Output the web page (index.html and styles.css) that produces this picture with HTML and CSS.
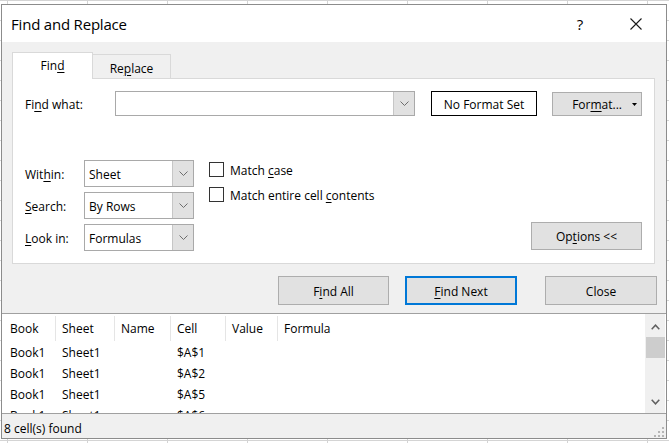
FILE: index.html
```html
<!DOCTYPE html>
<html>
<head>
<meta charset="utf-8">
<link rel="stylesheet" href="styles.css">
</head>
<body>
<div class="dialog">
  <div class="titlebar">
    <span class="title">Find and Replace</span>
    <span class="tb-btn help">?</span>
    <span class="tb-btn close"><svg width="12" height="12" viewBox="0 0 12 12"><path d="M0.5 0.5 L11.5 11.5 M11.5 0.5 L0.5 11.5" stroke="#1a1a1a" stroke-width="1.1" fill="none"/></svg></span>
  </div>
  <div class="main">
    <div class="tabs">
      <div class="tab active">Fin<u>d</u></div>
      <div class="tab">Re<u>p</u>lace</div>
    </div>
    <div class="panel">
      <div class="row-find">
        <span class="lbl-find">Fi<u>n</u>d what:</span>
        <div class="combo combo-find">
          <span class="combo-text"></span>
          <span class="combo-btn"><svg width="9" height="5" viewBox="0 0 9 5"><path d="M0.5 0.5 L4.5 4.5 L8.5 0.5" stroke="#6d6d6d" fill="none"/></svg></span>
        </div>
        <div class="fmt-preview">No Format Set</div>
        <div class="btn btn-format"><span>For<u>m</u>at...</span><svg width="5" height="3" viewBox="0 0 5 3"><path d="M0 0 H5 L2.5 3 Z" fill="#000"/></svg></div>
      </div>
      <div class="row-options">
        <div class="opt-grid">
          <span class="lbl">Wit<u>h</u>in:</span>
          <div class="combo"><span class="combo-text">Sheet</span><span class="combo-btn"><svg width="9" height="5" viewBox="0 0 9 5"><path d="M0.5 0.5 L4.5 4.5 L8.5 0.5" stroke="#6d6d6d" fill="none"/></svg></span></div>
          <span class="lbl"><u>S</u>earch:</span>
          <div class="combo"><span class="combo-text">By Rows</span><span class="combo-btn"><svg width="9" height="5" viewBox="0 0 9 5"><path d="M0.5 0.5 L4.5 4.5 L8.5 0.5" stroke="#6d6d6d" fill="none"/></svg></span></div>
          <span class="lbl"><u>L</u>ook in:</span>
          <div class="combo"><span class="combo-text">Formulas</span><span class="combo-btn"><svg width="9" height="5" viewBox="0 0 9 5"><path d="M0.5 0.5 L4.5 4.5 L8.5 0.5" stroke="#6d6d6d" fill="none"/></svg></span></div>
        </div>
        <div class="checks">
          <div class="check"><span class="box"></span><span>Match <u>c</u>ase</span></div>
          <div class="check"><span class="box"></span><span>Match entire cell <u>c</u>ontents</span></div>
        </div>
        <div class="btn btn-options">Op<u>t</u>ions &lt;&lt;</div>
      </div>
    </div>
    <div class="actions">
      <div class="btn act">F<u>i</u>nd All</div>
      <div class="btn act default"><u>F</u>ind Next</div>
      <div class="btn act close-btn">Close</div>
    </div>
  </div>
  <div class="results">
    <div class="table">
      <div class="thead">
        <span class="c c1">Book</span><span class="c c2">Sheet</span><span class="c c3">Name</span><span class="c c4">Cell</span><span class="c c5">Value</span><span class="c c6">Formula</span>
      </div>
      <div class="tr"><span class="c c1">Book1</span><span class="c c2">Sheet1</span><span class="c c3"></span><span class="c c4">$A$1</span></div>
      <div class="tr"><span class="c c1">Book1</span><span class="c c2">Sheet1</span><span class="c c3"></span><span class="c c4">$A$2</span></div>
      <div class="tr"><span class="c c1">Book1</span><span class="c c2">Sheet1</span><span class="c c3"></span><span class="c c4">$A$5</span></div>
      <div class="tr"><span class="c c1">Book1</span><span class="c c2">Sheet1</span><span class="c c3"></span><span class="c c4">$A$6</span></div>
    </div>
    <div class="scrollbar">
      <span class="sb-btn sb-up"><svg width="9" height="6" viewBox="0 0 9 6"><path d="M0.7 5.2 L4.5 1.2 L8.3 5.2" stroke="#606060" stroke-width="1.5" fill="none"/></svg></span>
      <span class="thumb"></span>
      <span class="sb-fill"></span>
      <span class="sb-btn"><svg width="9" height="6" viewBox="0 0 9 6"><path d="M0.7 0.8 L4.5 4.8 L8.3 0.8" stroke="#606060" stroke-width="1.5" fill="none"/></svg></span>
    </div>
  </div>
  <div class="status">
    <span>8 cell(s) found</span>
    <svg class="grip" width="10" height="10" viewBox="0 0 10 10"><g fill="#b5b5b5"><rect x="8" y="0" width="2" height="2"/><rect x="4" y="4" width="2" height="2"/><rect x="8" y="4" width="2" height="2"/><rect x="0" y="8" width="2" height="2"/><rect x="4" y="8" width="2" height="2"/><rect x="8" y="8" width="2" height="2"/></g></svg>
  </div>
</div>
</body>
</html>
```
FILE: styles.css
```css
* { box-sizing: border-box; }
html, body { margin: 0; }
body {
  width: 669px;
  height: 443px;
  overflow: hidden;
  padding: 4px 0 0 1px;
  background-color: #fff;
  background-image:
    linear-gradient(to right, #d4d4d4 1px, transparent 1px),
    linear-gradient(to bottom, #d4d4d4 1px, transparent 1px);
  background-size: 80px 100%, 100% 20px;
  background-position: 7px 0, 0 0;
  font-family: "Segoe UI", "Open Sans", "Noto Sans", sans-serif;
  font-size: 12px;
  color: #000;
}
u { text-decoration: underline; text-underline-offset: 2px; }

.dialog {
  width: 666px;
  height: 435px;
  border: 1px solid #8c8c8c;
  background: #f0f0f0;
  display: flex;
  flex-direction: column;
  overflow: hidden;
}

.titlebar {
  height: 37px;
  flex: none;
  background: #fff;
  display: flex;
  align-items: center;
  padding: 1px 7px 0 9px;
}
.title { flex: 1; font-size: 15px; letter-spacing: -0.2px; }
.tb-btn {
  width: 46px;
  height: 30px;
  display: flex;
  align-items: center;
  justify-content: center;
}
.help { font-size: 15px; margin-right: 10px; }

.main {
  flex: none;
  padding: 10px 11px 8px 10px;
  display: flex;
  flex-direction: column;
}

.tabs { display: flex; height: 26px; align-items: flex-end; }
.tab {
  display: flex;
  align-items: center;
  justify-content: center;
  border: 1px solid #d9d9d9;
  border-bottom: none;
}
.tab.active {
  width: 81px;
  height: 27px;
  background: #fff;
  position: relative;
  z-index: 1;
  margin-bottom: -1px;
  padding-bottom: 1px;
}
.tab:not(.active) {
  width: 78px;
  height: 24px;
  border-left: none;
  padding-top: 3px;
}

.panel {
  height: 186px;
  background: #fff;
  border: 1px solid #d9d9d9;
  padding: 12px 12px 12px 12px;
  display: flex;
  flex-direction: column;
}

.row-find { display: flex; align-items: center; height: 25px; }
.lbl-find { width: 90px; flex: none; padding-top: 1px; }
.lbl { padding-top: 2px; }

.combo {
  display: flex;
  height: 27px;
  border: 1px solid #a9a9a9;
  background: #fff;
}
.combo-text { flex: 1; display: flex; align-items: center; padding-left: 4px; padding-top: 1px; }
.combo-btn {
  width: 21px;
  flex: none;
  background: #e1e1e1;
  border-left: 1px solid #c6c6c6;
  display: flex;
  align-items: center;
  justify-content: center;
}
.combo-find { width: 300px; height: 25px; }

.fmt-preview {
  margin-left: 16px;
  width: 106px;
  height: 25px;
  border: 1px solid #000;
  display: flex;
  align-items: center;
  justify-content: center;
  padding-top: 1px;
}

.btn {
  background: #e1e1e1;
  border: 1px solid #adadad;
  display: flex;
  align-items: center;
  justify-content: center;
  padding-top: 1px;
}
.btn-format {
  margin-left: 15px;
  width: 90px;
  height: 24px;
  justify-content: flex-end;
  padding-right: 4px;
  gap: 10px;
}

.row-options { display: flex; margin-top: 44px; flex: 1; }
.opt-grid {
  display: grid;
  grid-template-columns: 59px 110px;
  grid-auto-rows: 27px;
  row-gap: 5px;
  align-items: center;
}
.opt-grid .combo { height: 27px; }

.checks { margin-left: 15px; margin-top: -3px; display: flex; flex-direction: column; }
.check { height: 25px; display: flex; align-items: center; gap: 6px; }
.check span:last-child { padding-top: 2px; }
.box {
  width: 15px;
  height: 15px;
  border: 1px solid #333;
  background: #fff;
  flex: none;
}

.btn-options {
  margin-left: auto;
  align-self: flex-end;
  margin-bottom: 1px;
  width: 111px;
  height: 28px;
}

.actions {
  display: flex;
  justify-content: flex-end;
  margin-top: 12px;
  margin-right: -2px;
}
.act { width: 111px; height: 29px; }
.act.default {
  margin-left: 16px;
  width: 112px;
  border: 2px solid #0078d7;
}
.act.close-btn { margin-left: 28px; width: 112px; }

.results {
  height: 101px;
  flex: none;
  background: #fff;
  border-top: 1px solid #a0a0a0;
  border-bottom: 1px solid #a0a0a0;
  display: flex;
  overflow: hidden;
}
.table { flex: 1; overflow: hidden; }
.thead { display: flex; height: 27px; align-items: stretch; padding-top: 2px; }
.thead .c { border-right: 1px solid #e5e5e5; }
.thead .c6 { border-right: none; }
.tr { display: flex; height: 21px; align-items: center; padding-top: 1px; }
.c { display: flex; align-items: center; padding-left: 6px; flex: none; white-space: nowrap; }
.c1 { width: 54px; padding-left: 8px; }
.c2 { width: 59px; }
.c3 { width: 56px; }
.c4 { width: 55px; }
.c5 { width: 52px; }
.c6 { width: 80px; }

.scrollbar {
  width: 20px;
  margin-right: 1px;
  background: #f0f0f0;
  display: flex;
  flex-direction: column;
}
.sb-btn { height: 22px; display: flex; align-items: center; justify-content: center; flex: none; }
.sb-up { align-items: flex-end; padding-bottom: 6px; }
.thumb { height: 21px; margin: 1px 0 0 1px; background: #cdcdcd; flex: none; }
.sb-fill { flex: 1; }

.status {
  flex: 1;
  display: flex;
  align-items: center;
  padding: 5px 2px 0 2px;
}
.status span { flex: 1; }
.grip { align-self: flex-end; margin-bottom: 1px; }
```
